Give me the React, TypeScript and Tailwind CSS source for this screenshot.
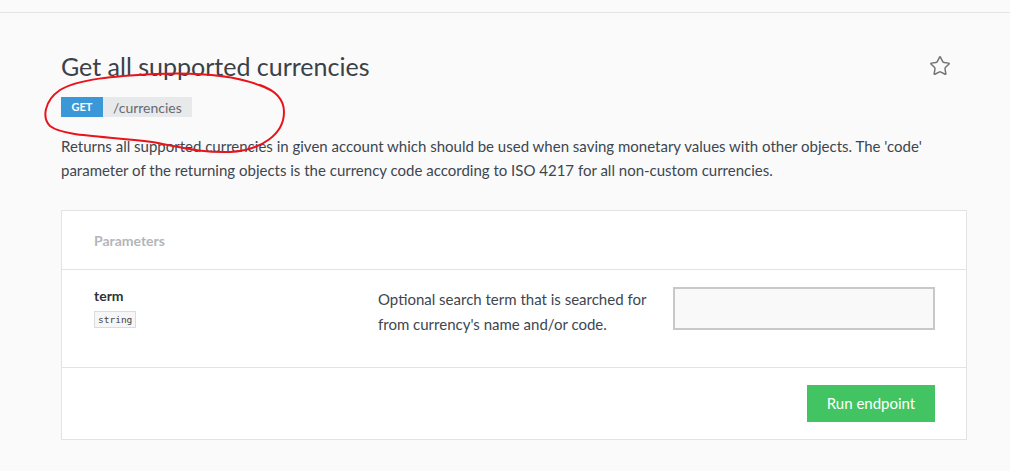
import { Star } from "lucide-react";

const Annotation = () => (
  <svg
    className="pointer-events-none absolute left-[40px] top-[70px]"
    width="250"
    height="90"
    viewBox="0 0 250 90"
    fill="none"
  >
    <path
      d="M232 21 C205 6 160 2 115 4 C75 6 38 9 20 20 C4 31 2 48 10 56 C24 67 70 66 112 72 C140 77 162 83 190 82 C222 80 244 64 244 42 C244 28 234 20 220 15"
      stroke="#e8131b"
      strokeWidth="2"
      strokeLinecap="round"
    />
  </svg>
);

const App = () => {
  return (
    <div className="relative min-h-[471px] bg-[#fafafa] font-['Lato','Noto_Sans',sans-serif]">
      <div className="h-[13px] border-b border-[#e4e4e4]" />

      <div className="pl-[61px] pr-[43px] pt-[38px]">
        <div className="flex items-start justify-between">
          <h1 className="text-[25px] leading-[31px] text-[#3b4148]">Get all supported currencies</h1>
          <Star className="mr-[16px] mt-[4px] h-[22px] w-[22px] text-[#737373]" strokeWidth={1.6} />
        </div>

        <div className="mt-[15px] flex h-[20px] items-stretch">
          <span className="flex w-[42px] items-center justify-center bg-[#3a98d9] text-[11px] font-bold text-white">GET</span>
          <span className="flex items-center bg-[#e7e9eb] px-[10px] text-[14px] text-[#666b70]">/currencies</span>
        </div>

        <p className="mt-[17px] text-[15px] leading-[24px] text-[#3d4650]">
          Returns all supported currencies in given account which should be used when saving monetary values with other objects. The 'code'
          parameter of the returning objects is the currency code according to ISO 4217 for all non-custom currencies.
        </p>

        <div className="mt-[28px] border border-[#e3e3e3] bg-white">
          <div className="flex h-[59px] items-center border-b border-[#e3e3e3] px-[32px]">
            <span className="text-[14px] font-bold text-[#b3b6b9]">Parameters</span>
          </div>

          <div className="flex h-[98px] border-b border-[#e3e3e3] pl-[32px] pr-[31px] pt-[17px]">
            <div className="w-[284px]">
              <div className="text-[14px] font-bold leading-[18px] text-[#2e3338]">term</div>
              <span className="inline-block border border-[#dcdcdc] bg-[#f6f6f6] px-[3px] font-['DejaVu_Sans_Mono',monospace] text-[9.5px] leading-[15px] text-[#444]">
                string
              </span>
            </div>
            <p className="w-[295px] text-[15px] leading-[25px] text-[#3d4650]">
              Optional search term that is searched for from currency's name and/or code.
            </p>
            <input
              type="text"
              className="ml-auto h-[43px] w-[262px] border-2 border-[#c8c8c8] bg-[#f9f9f9] outline-none"
            />
          </div>

          <div className="flex h-[71px] items-center justify-end pr-[31px]">
            <button className="h-[37px] w-[128px] bg-[#43c462] text-[15px] text-white">Run endpoint</button>
          </div>
        </div>
      </div>

      <Annotation />
    </div>
  );
};

export default App;
